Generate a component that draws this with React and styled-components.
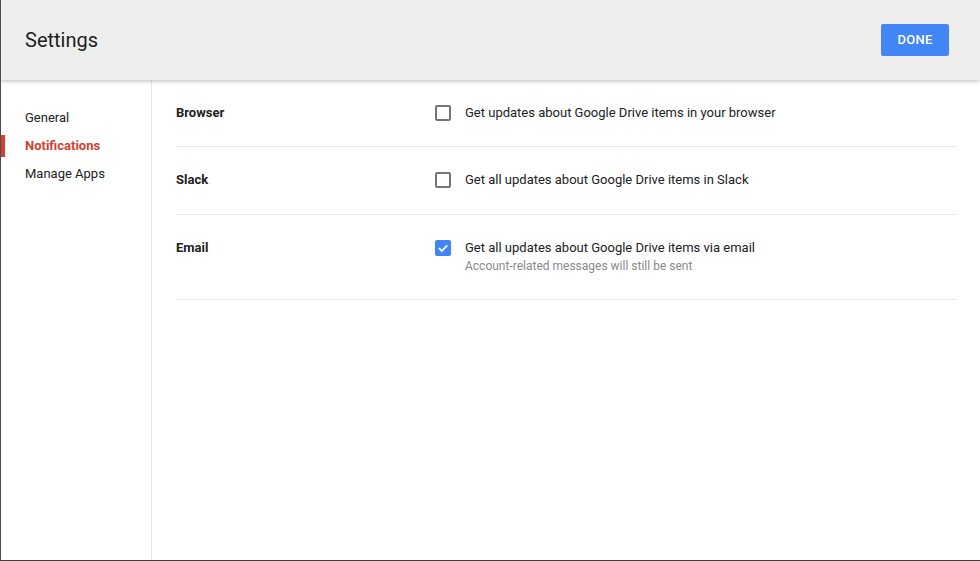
import React from 'react';
import styled, { createGlobalStyle } from 'styled-components';

const GlobalStyle = createGlobalStyle`
    html, body {
        margin: 0;
        padding: 0;
        background: #ffffff;
    }
    body {
        font-family: Roboto, "Liberation Sans", Arial, sans-serif;
        color: #212121;
        -webkit-font-smoothing: antialiased;
    }
`

const Frame = styled.div`
    height: 561px;
    box-sizing: border-box;
    border-left: 1px solid #4d4d4d;
    border-bottom: 1px solid #3f3f3f;
    display: flex;
    flex-direction: column;
    overflow: hidden;
`

const Header = styled.header`
    height: 80px;
    flex-shrink: 0;
    box-sizing: border-box;
    background: #eeeeee;
    display: flex;
    align-items: center;
    justify-content: space-between;
    padding: 0 31px 0 24px;
    box-shadow: 0 1px 4px rgba(0, 0, 0, 0.28);
    position: relative;
    z-index: 1;

    h1 {
        margin: 0;
        font-size: 20px;
        font-weight: 400;
        color: #212121;
    }
`

const DoneButton = styled.button`
    width: 68px;
    height: 32px;
    margin-top: -1px;
    border: none;
    border-radius: 2px;
    background: #4285f4;
    color: #ffffff;
    font-family: Roboto, "Liberation Sans", Arial, sans-serif;
    font-size: 13px;
    font-weight: 500;
    letter-spacing: 0.3px;
    cursor: pointer;
`

const Body = styled.div`
    flex: 1;
    display: flex;
`

const Sidebar = styled.nav`
    width: 151px;
    flex-shrink: 0;
    box-sizing: border-box;
    border-right: 1px solid #e6e6e6;
    padding-top: 24px;
`

const NavItem = styled.div`
    position: relative;
    height: 28px;
    line-height: 28px;
    padding-left: 24px;
    font-size: 13px;
    font-weight: ${p => (p.active ? 700 : 400)};
    color: ${p => (p.active ? '#d23f31' : '#212121')};

    &::before {
        content: '';
        display: ${p => (p.active ? 'block' : 'none')};
        position: absolute;
        left: 0;
        top: 3px;
        width: 4px;
        height: 22px;
        background: #d23f31;
    }
`

const Content = styled.main`
    flex: 1;
    margin-top: -1px;
    padding: 0 23px 0 24px;
`

const Row = styled.div`
    display: flex;
    padding: 23px 0 24px;
    border-bottom: 1px solid #e8e8e8;

    &:first-child {
        padding-top: 24px;
        padding-bottom: 23px;
    }
`

const Label = styled.div`
    width: 259px;
    flex-shrink: 0;
    font-size: 13px;
    font-weight: 700;
    line-height: 20px;
    color: #212121;
`

const Option = styled.div`
    display: flex;
    align-items: flex-start;
    gap: 14px;
`

const Box = styled.span`
    width: 16px;
    height: 16px;
    margin-top: 2px;
    box-sizing: border-box;
    border-radius: 2px;
    flex-shrink: 0;
    display: flex;
    align-items: center;
    justify-content: center;
    border: ${p => (p.checked ? 'none' : '2px solid #757575')};
    background: ${p => (p.checked ? '#4285f4' : 'transparent')};
`

const OptionText = styled.div`
    font-size: 13px;
    line-height: 20px;
    color: #212121;

    small {
        display: block;
        font-size: 12px;
        line-height: 17px;
        color: #8a8a8a;
    }
`

const settings = [
    { name: 'Browser', text: 'Get updates about Google Drive items in your browser', checked: false },
    { name: 'Slack', text: 'Get all updates about Google Drive items in Slack', checked: false },
    {
        name: 'Email',
        text: 'Get all updates about Google Drive items via email',
        note: 'Account-related messages will still be sent',
        checked: true,
    },
]

const Checkbox = ({ checked }) => (
    <Box checked={checked}>
        {checked && (
            <svg width="12" height="12" viewBox="0 0 12 12">
                <path d="M2 6.2 L4.8 9 L10.2 3.4" fill="none" stroke="#ffffff" strokeWidth="1.8" />
            </svg>
        )}
    </Box>
)

const App = () => {
    return (
        <Frame>
            <GlobalStyle />
            <Header>
                <h1>Settings</h1>
                <DoneButton>DONE</DoneButton>
            </Header>
            <Body>
                <Sidebar>
                    <NavItem>General</NavItem>
                    <NavItem active>Notifications</NavItem>
                    <NavItem>Manage Apps</NavItem>
                </Sidebar>
                <Content>
                    {settings.map(s => (
                        <Row key={s.name}>
                            <Label>{s.name}</Label>
                            <Option>
                                <Checkbox checked={s.checked} />
                                <OptionText>
                                    {s.text}
                                    {s.note && <small>{s.note}</small>}
                                </OptionText>
                            </Option>
                        </Row>
                    ))}
                </Content>
            </Body>
        </Frame>
    );
};

export default App;
